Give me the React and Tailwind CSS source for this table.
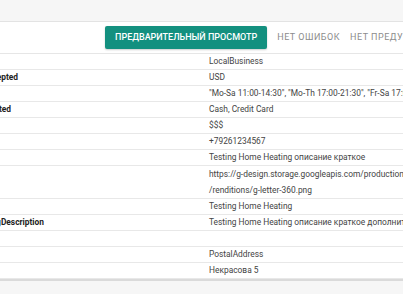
import React from "react";

const rows = [
  { label: "", end: 0, value: "LocalBusiness" },
  { label: "currenciesAccepted", end: 18, value: "USD" },
  { label: "", end: 0, value: "\"Mo-Sa 11:00-14:30\", \"Mo-Th 17:00-21:30\", \"Fr-Sa 17:00-22:00\"" },
  { label: "paymentAccepted", end: 11, value: "Cash, Credit Card" },
  { label: "", end: 0, value: "$$$" },
  { label: "", end: 0, value: "+79261234567" },
  { label: "", end: 0, value: "Testing Home Heating описание краткое" },
  { label: "", end: 0, value: ["https://g-design.storage.googleapis.com/production/v6/assets", "/renditions/g-letter-360.png"] },
  { label: "", end: 0, value: "Testing Home Heating" },
  { label: "disambiguatingDescription", end: 44, value: "Testing Home Heating описание краткое дополнительное" },
  { label: "", end: 0, value: "" },
  { label: "", end: 0, value: "PostalAddress" },
  { label: "", end: 0, value: "Некрасова 5" },
];

export default function App() {
  return (
    <div
      className="w-[403px] h-[294px] overflow-hidden bg-[#f6f6f6] flex flex-col"
      style={{ fontFamily: "Roboto, 'Liberation Sans', sans-serif" }}
    >
      <div className="h-[22px] shrink-0 bg-[#f6f6f6] border-b border-[#e3e3e3]" />
      <div className="bg-white shrink-0">
        <div className="h-[32px] flex items-center pl-[105px] gap-[10px] whitespace-nowrap border-b border-[#e6e6e6]">
          <div className="h-[23px] px-[10px] shrink-0 rounded-[2px] bg-[#13907f] text-white text-[9px] font-medium flex items-center justify-center shadow-[0_1px_2px_rgba(0,0,0,0.2)]">
            ПРЕДВАРИТЕЛЬНЫЙ ПРОСМОТР
          </div>
          <span className="text-[9px] text-[#8c8c8c] tracking-[0.5px]">НЕТ ОШИБОК</span>
          <span className="text-[9px] text-[#8c8c8c] tracking-[0.5px]">НЕТ ПРЕДУПРЕЖДЕНИЙ</span>
        </div>
        {rows.map((r, i) => (
          <div key={i} className="flex border-b border-[#e8e8e8] text-[8.4px] whitespace-nowrap">
            <div className="w-[209px] shrink-0 flex">
              {r.label ? (
                <div
                  className="flex justify-end font-bold text-[#222]"
                  style={{ width: r.end }}
                >
                  <span className="leading-[15px]">{r.label}</span>
                </div>
              ) : null}
            </div>
            <div className="text-[#444] flex-1 min-w-0">
              {Array.isArray(r.value) ? (
                <div className="leading-[16px]">
                  <div>{r.value[0]}</div>
                  <div>{r.value[1]}</div>
                </div>
              ) : (
                <div className="leading-[15px] h-[15px]">{r.value}</div>
              )}
            </div>
          </div>
        ))}
      </div>
      <div className="h-[2px] shrink-0 bg-[#dadada]" />
      <div className="flex-1 bg-[#f6f6f6]" />
    </div>
  );
}
